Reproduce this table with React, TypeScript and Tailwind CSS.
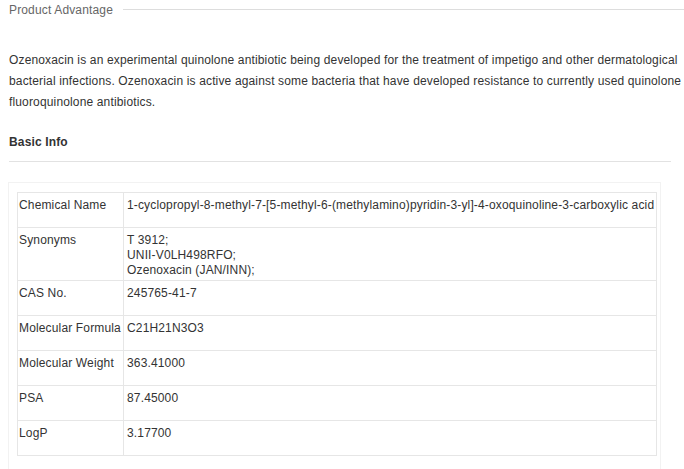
const rows: { label: string; value: string[]; tall?: boolean }[] = [
  { label: "Chemical Name", value: ["1-cyclopropyl-8-methyl-7-[5-methyl-6-(methylamino)pyridin-3-yl]-4-oxoquinoline-3-carboxylic acid"] },
  { label: "Synonyms", value: ["T 3912;", "UNII-V0LH498RFO;", "Ozenoxacin (JAN/INN);"], tall: true },
  { label: "CAS No.", value: ["245765-41-7"] },
  { label: "Molecular Formula", value: ["C21H21N3O3"] },
  { label: "Molecular Weight", value: ["363.41000"] },
  { label: "PSA", value: ["87.45000"] },
  { label: "LogP", value: ["3.17700"] },
]

export default function App() {
  return (
    <div className="w-[684px] h-[469px] overflow-hidden bg-white font-['Liberation_Sans',Arial,sans-serif] text-[12px] tracking-[0.15px] text-[#333]">
      <div className="w-[712px] pl-[9px]">
        <div className="flex items-center h-[19px]">
          <span className="text-[#666]">Product Advantage</span>
          <div className="flex-1 ml-[10px] border-t border-[#ddd]" />
        </div>

        <p className="mt-[31px] leading-[21px]">
          Ozenoxacin is an experimental quinolone antibiotic being developed for the treatment of impetigo and other dermatological bacterial infections. Ozenoxacin is active against some bacteria that have developed resistance to currently used quinolone and fluoroquinolone antibiotics.
        </p>

        <h3 className="mt-[19px] font-bold leading-[21px]">Basic Info</h3>
        <div className="mt-[8px] w-[662px] border-t border-[#e2e2e2]" />

        <div className="mt-[20px] -ml-[1px] w-[653px] border border-[#f2f2f2] pl-[8px] pt-[9px] pb-[20px]">
          <table className="w-[640px] border-collapse">
            <tbody>
              {rows.map((r) => (
                <tr key={r.label} className={r.tall ? "h-[53px]" : "h-[35px]"}>
                  <td className="w-[106px] border border-[#e6e6e6] align-top pl-[1px] pt-[5px] leading-[15px] whitespace-nowrap">
                    {r.label}
                  </td>
                  <td className="border border-[#e6e6e6] align-top pl-[3px] pt-[5px] leading-[15px] whitespace-nowrap">
                    {r.value.map((v) => (
                      <div key={v}>{v}</div>
                    ))}
                  </td>
                </tr>
              ))}
            </tbody>
          </table>
        </div>
      </div>
    </div>
  )
}
